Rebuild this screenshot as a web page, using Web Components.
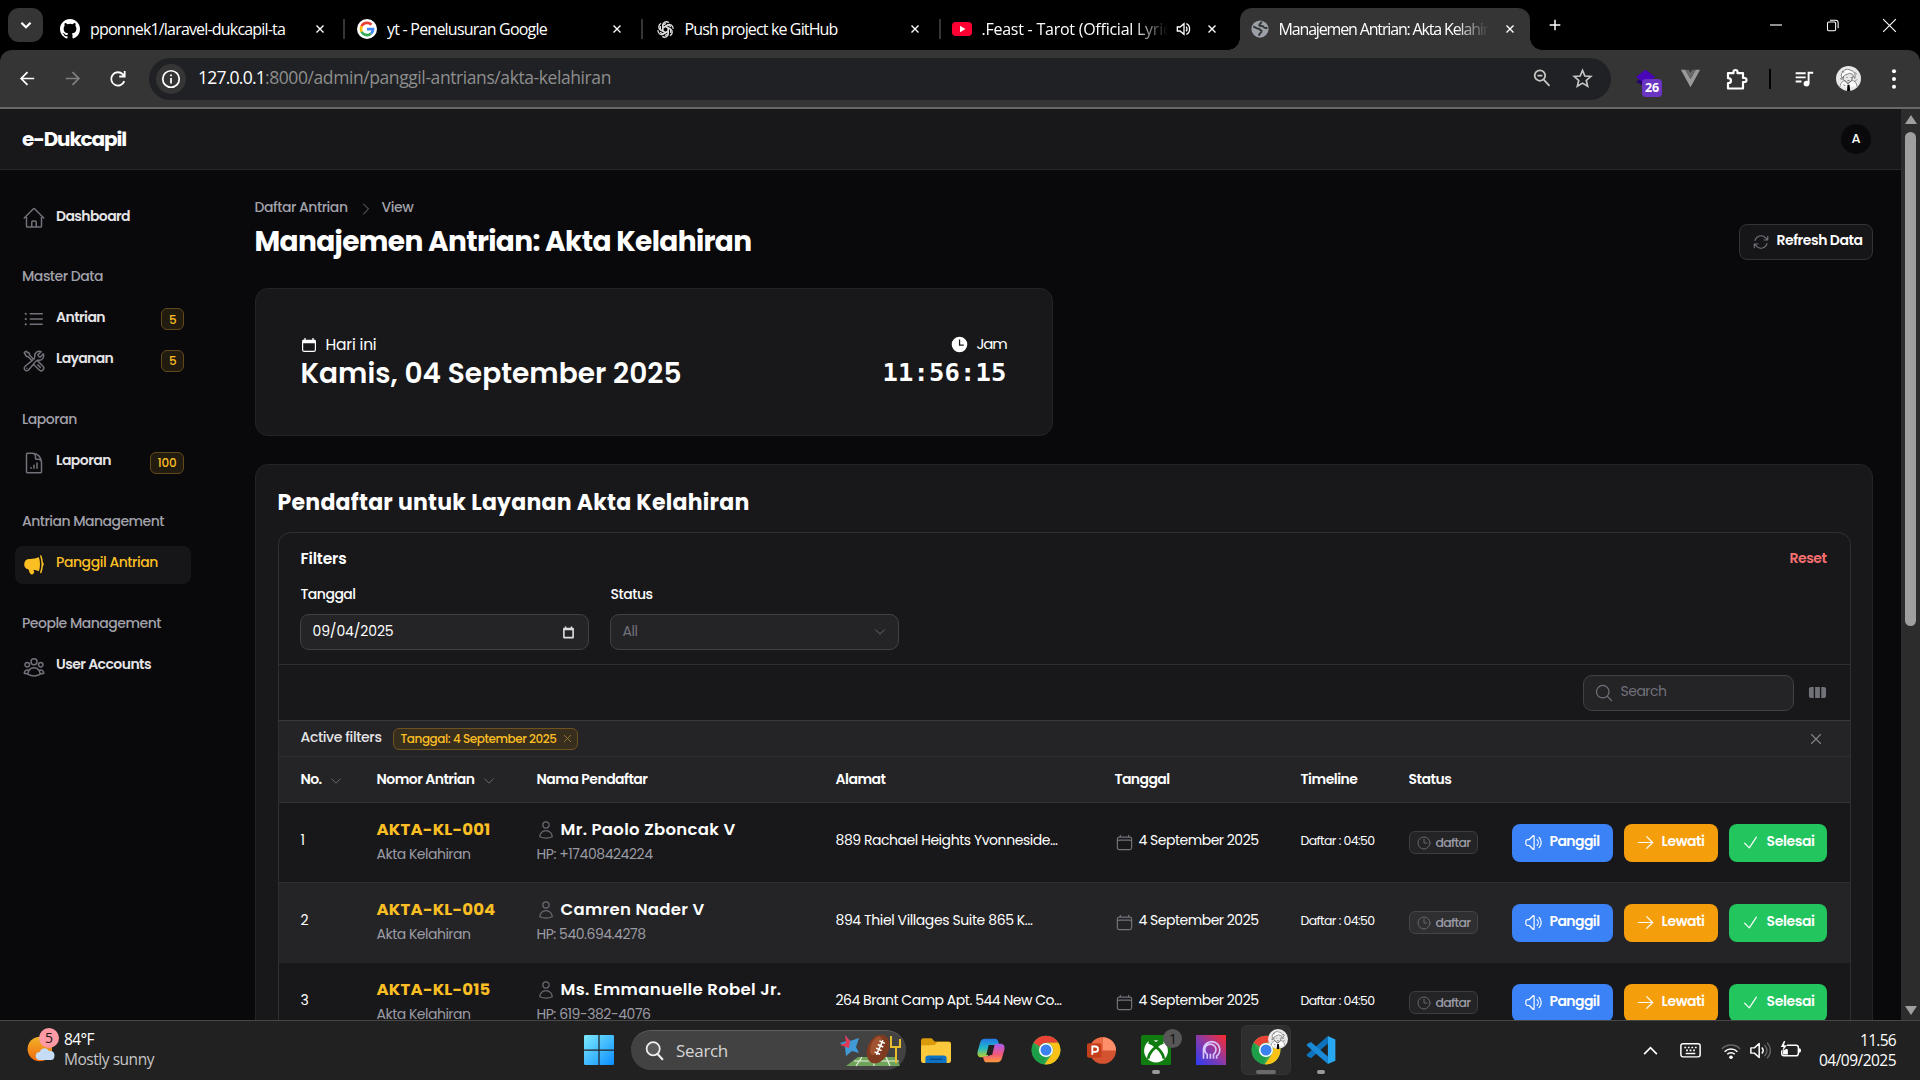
<!DOCTYPE html>
<html lang="id">
<head>
<meta charset="utf-8">
<title>Manajemen Antrian: Akta Kelahiran</title>
<style>
html,body{margin:0;height:100%;background:#000;overflow:hidden}
body{width:1920px;height:1080px;display:flex;flex-direction:column;font-family:Poppins,Inter,sans-serif;color:#fff}
</style>
</head>
<body>
<tab-strip></tab-strip>
<tool-bar></tool-bar>
<admin-page></admin-page>
<task-bar></task-bar>
<script>
const define=(name,html,setup)=>customElements.define(name,class extends HTMLElement{
  constructor(){super();this.attachShadow({mode:'open'});}
  connectedCallback(){
    if(this.ready)return;this.ready=true;
    this.shadowRoot.innerHTML='<style>*{box-sizing:border-box}</style>'+(typeof html==='function'?html(this):html);
    if(setup)setup(this);
  }
});
const A=(e,n,d='')=>e.getAttribute(n)??d;

/* ---------- icon set ---------- */
const O=d=>`<g fill="none" stroke="currentColor" stroke-width="1.5" stroke-linecap="round" stroke-linejoin="round">${d.split('|').map(p=>`<path d="${p}"/>`).join('')}</g>`;
const chrome=`<circle cx="12" cy="12" r="11.5" fill="#34a853"/><path d="M12 .5a11.5 11.5 0 0 1 9.96 5.75H12A5.75 5.75 0 0 0 7 9.1L2.04 6.25A11.5 11.5 0 0 1 12 .5z" fill="#ea4335"/><path d="M2.04 6.25 7.02 14.9A5.75 5.75 0 0 0 12 17.75L9.7 23.3A11.5 11.5 0 0 1 2.04 6.25z" fill="#1e9e48"/><path d="M21.96 6.25A11.5 11.5 0 0 1 11 23.45l5.98-8.57A5.75 5.75 0 0 0 12 6.25z" fill="#fbc116"/><circle cx="12" cy="12" r="5.6" fill="#fff"/><circle cx="12" cy="12" r="4.4" fill="#3b82f0"/>`;
const face=`<circle cx="12" cy="12" r="12" fill="#e8e8e8"/><path d="M5 9c1-5 5-7 9-5 4 1 5 5 4 8l-2-4-3-1-5 2-2 3z" fill="#fff" stroke="#777" stroke-width=".9"/><path d="M4 20c0-4 3-6 5-6l3 3 3-3c3 0 5 2 5 6" fill="#fff" stroke="#888" stroke-width=".9"/><path d="M7 10v3l4 4 4-3 1-4M10 11h1M14 11h1M11 14h2M4 12l2 1M18 6l2 2M6 5l2 1M20 13l-2 2M7 18l2 1" fill="none" stroke="#666" stroke-width=".9"/><path d="M11 18h2l.6 6h-3z" fill="#000"/>`;
const ICONS={
home:O('m2.25 12 8.954-8.955c.44-.439 1.152-.439 1.591 0L21.75 12M4.5 9.75v10.125c0 .621.504 1.125 1.125 1.125H9.75v-4.875c0-.621.504-1.125 1.125-1.125h2.25c.621 0 1.125.504 1.125 1.125V21h4.125c.621 0 1.125-.504 1.125-1.125V9.75M8.25 21h8.25'),
list:O('M8.25 6.75h12M8.25 12h12m-12 5.25h12M3.75 6.75h.007v.008H3.75V6.75Zm.375 0a.375.375 0 1 1-.75 0 .375.375 0 0 1 .75 0ZM3.75 12h.007v.008H3.75V12Zm.375 0a.375.375 0 1 1-.75 0 .375.375 0 0 1 .75 0Zm-.375 5.25h.007v.008H3.75v-.008Zm.375 0a.375.375 0 1 1-.75 0 .375.375 0 0 1 .75 0Z'),
tools:O('M11.42 15.17 17.25 21A2.652 2.652 0 0 0 21 17.25l-5.877-5.877M11.42 15.17l2.496-3.03c.317-.384.74-.626 1.208-.766M11.42 15.17l-4.655 5.653a2.548 2.548 0 1 1-3.586-3.586l6.837-5.63m5.108-.233c.55-.164 1.163-.188 1.743-.14a4.5 4.5 0 0 0 4.486-6.336l-3.276 3.277a3.004 3.004 0 0 1-2.25-2.25l3.276-3.276a4.5 4.5 0 0 0-6.336 4.486c.091 1.076-.071 2.264-.904 2.95l-.102.085m-1.745 1.437L5.909 7.5H4.5L2.25 3.75l1.5-1.5L7.5 4.5v1.409l4.26 4.26m-1.745 1.437 1.745-1.437m6.615 8.206L15.75 15.75M4.867 19.125h.008v.008h-.008v-.008Z'),
doc:O('M19.5 14.25v-2.625a3.375 3.375 0 0 0-3.375-3.375h-1.5A1.125 1.125 0 0 1 13.5 7.125v-1.5a3.375 3.375 0 0 0-3.375-3.375H8.25M9 16.5v.75m3-3v3M15 12v5.25m-4.5-15H5.625c-.621 0-1.125.504-1.125 1.125v17.25c0 .621.504 1.125 1.125 1.125h12.75c.621 0 1.125-.504 1.125-1.125V11.25a9 9 0 0 0-9-9Z'),
horn:'<path fill="currentColor" d="M16.881 4.345A23.112 23.112 0 0 1 8.25 6H7.5a5.25 5.25 0 0 0-.88 10.427 21.593 21.593 0 0 0 1.378 3.94c.464 1.004 1.674 1.32 2.582.796l.657-.379c.88-.508 1.165-1.593.772-2.468a17.116 17.116 0 0 1-.628-1.607c1.918.258 3.76.75 5.5 1.446A21.727 21.727 0 0 0 18 11.25c0-2.414-.393-4.735-1.119-6.905ZM18.26 3.74a23.22 23.22 0 0 1 1.24 7.51 23.22 23.22 0 0 1-1.41 7.992.75.75 0 1 0 1.409.516 24.555 24.555 0 0 0 1.415-6.43 2.992 2.992 0 0 0 .836-2.078c0-.807-.319-1.54-.836-2.078a24.65 24.65 0 0 0-1.415-6.43.75.75 0 1 0-1.409.516c.059.16.116.321.17.483Z"/>',
group:O('M18 18.72a9.094 9.094 0 0 0 3.741-.479 3 3 0 0 0-4.682-2.72m.94 3.198.001.031c0 .225-.012.447-.037.666A11.944 11.944 0 0 1 12 21c-2.17 0-4.207-.576-5.963-1.584A6.062 6.062 0 0 1 6 18.719m12 0a5.971 5.971 0 0 0-.941-3.197m0 0A5.995 5.995 0 0 0 12 12.75a5.995 5.995 0 0 0-5.058 2.772m0 0a3 3 0 0 0-4.681 2.72 8.986 8.986 0 0 0 3.74.477m.94-3.197a5.971 5.971 0 0 0-.94 3.197M15 6.75a3 3 0 1 1-6 0 3 3 0 0 1 6 0Zm6 3a2.25 2.25 0 1 1-4.5 0 2.25 2.25 0 0 1 4.5 0Zm-13.5 0a2.25 2.25 0 1 1-4.5 0 2.25 2.25 0 0 1 4.5 0Z'),
refresh:O('M16.023 9.348h4.992v-.001M2.985 19.644v-4.992m0 0h4.992m-4.993 0 3.181 3.183a8.25 8.25 0 0 0 13.803-3.7M4.031 9.865a8.25 8.25 0 0 1 13.803-3.7l3.181 3.182m0-4.991v4.99'),
cr:O('m8.25 4.5 7.5 7.5-7.5 7.5'),
cd:O('m19.5 8.25-7.5 7.5-7.5-7.5'),
x:O('M6 18 18 6M6 6l12 12'),
cal:O('M6.75 3v2.25M17.25 3v2.25M3 18.75V7.5a2.25 2.25 0 0 1 2.25-2.25h13.5A2.25 2.25 0 0 1 21 7.5v11.25m-18 0A2.25 2.25 0 0 0 5.25 21h13.5A2.25 2.25 0 0 0 21 18.75m-18 0v-7.5A2.25 2.25 0 0 1 5.25 9h13.5A2.25 2.25 0 0 1 21 11.25v7.5'),
calw:'<path fill="currentColor" fill-rule="evenodd" d="M5 1.5h2V4h10V1.5h2V4a3 3 0 0 1 3.5 3v12a3.500 3.500 0 0 1-3.500 3.500h-14A3.500 3.500 0 0 1 1.500 19V7A3 3 0 0 1 5 4zM3.300 9.500V19c0 1 .7 1.700 1.700 1.700h14c1 0 1.700-.7 1.700-1.700V9.500z"/>',
calin:'<path fill="#ddd" fill-rule="evenodd" d="M5 1h3v2h8V1h3v2h1a2 2 0 0 1 2 2v16a2 2 0 0 1-2 2H4a2 2 0 0 1-2-2V5a2 2 0 0 1 2-2h1zM5 8v12h14V8z"/>',
clockw:'<path fill="currentColor" fill-rule="evenodd" d="M12 1a11 11 0 1 0 0 22 11 11 0 0 0 0-22zM13 5v7h5v1.800h-6.800V5z"/>',
clock:O('M12 6v6h4.5m4.5 0a9 9 0 1 1-18 0 9 9 0 0 1 18 0Z'),
user:O('M15.75 6a3.75 3.75 0 1 1-7.5 0 3.75 3.75 0 0 1 7.5 0ZM4.501 20.118a7.5 7.5 0 0 1 14.998 0A17.933 17.933 0 0 1 12 21.75c-2.676 0-5.216-.584-7.499-1.632Z'),
spk:O('M19.114 5.636a9 9 0 0 1 0 12.728M16.463 8.288a5.25 5.25 0 0 1 0 7.424M6.75 8.25l4.72-4.72a.75.75 0 0 1 1.28.53v15.88a.75.75 0 0 1-1.28.53l-4.72-4.72H4.51c-.88 0-1.704-.507-1.938-1.354A9.009 9.009 0 0 1 2.25 12c0-.83.112-1.633.322-2.396C2.806 8.756 3.63 8.25 4.51 8.25H6.75Z'),
arrow:O('M13.5 4.5 21 12m0 0-7.5 7.5M21 12H3'),
check:O('m4.5 12.75 6 6 9-13.500'),
mag:O('m21 21-5.197-5.197m0 0A7.5 7.5 0 1 0 5.196 5.196a7.5 7.5 0 0 0 10.607 10.607Z'),
cols:'<path fill="currentColor" d="M14 17h2.750A2.250 2.250 0 0 0 19 14.750v-9.500A2.250 2.250 0 0 0 16.750 3H14zM12.500 3h-5v14h5zM3.250 3H6v14H3.250A2.250 2.250 0 0 1 1 14.750v-9.500A2.250 2.250 0 0 1 3.250 3Z" transform="translate(0 2) scale(1.2 1)"/>',
/* browser */
chev:'<path d="m7 9.500 5 5 5-5" fill="none" stroke="currentColor" stroke-width="2.400"/>',
close:'<path d="m6 6 12 12M18 6 6 18" fill="none" stroke="currentColor" stroke-width="2.400"/>',
plus:'<path d="M12 4v16M4 12h16" fill="none" stroke="currentColor" stroke-width="2.200"/>',
back:'<path d="M20.500 12H4.500M12 4l-8 8 8 8" fill="none" stroke="currentColor" stroke-width="2.200"/>',
fwd:'<path d="M3.500 12h16M12 4l8 8-8 8" fill="none" stroke="currentColor" stroke-width="2.200"/>',
reload:'<path d="M19.500 14.500A8 8 0 1 1 17.800 6.500L20 8.700M20 2.500v6.500h-6.500" fill="none" stroke="currentColor" stroke-width="2.200"/>',
info:'<circle cx="12" cy="12" r="9" fill="none" stroke="currentColor" stroke-width="1.900"/><path d="M12 11v6M12 7v2" stroke="currentColor" stroke-width="1.900"/>',
zoomout:'<circle cx="9.500" cy="9" r="6.300" fill="none" stroke="currentColor" stroke-width="2.100"/><path d="m14 14 7 7.500M6.500 9h6" stroke="currentColor" stroke-width="2.100"/>',
star:'<path d="m12 2.800 2.700 6.300 6.800.6-5.200 4.500 1.600 6.700-5.900-3.600-5.900 3.600 1.600-6.700L2.500 9.700l6.800-.6z" fill="none" stroke="currentColor" stroke-width="1.900"/>',
ext:'<path d="m1 16 11-8 11 8-10 8z" fill="#25066b"/><path d="M12 1 23 10 12 19 1 10z" fill="#4905b8"/>',
vue:'<path d="M1 2h5l6 10.500L18 2h5L12 22z" fill="#9a9a9a"/><path d="M6 2h4l2 3.500L14 2h4l-6 10.500z" fill="#686868"/>',
puzzle:'<path d="M3 6.200h5.500V5a2 2 0 0 1 4 0v1.200H18V11h1.500a2 2 0 0 1 0 4H18v6.500H3v-5.300c4 0 4-5 0-5z" fill="none" stroke="currentColor" stroke-width="2.200" stroke-linejoin="round"/>',
music:'<path d="M2 5h12M2 10h12M2 15h7" stroke="currentColor" stroke-width="2.300"/><circle cx="15" cy="17.500" r="3.500" fill="currentColor"/><path d="M17.500 17.500V4.500H23" fill="none" stroke="currentColor" stroke-width="2.300"/>',
dots:'<circle cx="12" cy="3.500" r="2.200" fill="currentColor"/><circle cx="12" cy="12" r="2.200" fill="currentColor"/><circle cx="12" cy="20.500" r="2.200" fill="currentColor"/>',
face,
github:'<path transform="scale(1.5)" fill="#fff" d="M8 0C3.58 0 0 3.58 0 8c0 3.54 2.29 6.530 5.470 7.590.4.070.550-.17.550-.38 0-.19-.010-.820-.010-1.490-2.010.370-2.530-.490-2.690-.940-.090-.230-.480-.940-.820-1.130-.280-.150-.680-.520-.010-.530.630-.010 1.080.580 1.230.820.720 1.210 1.870.870 2.330.660.070-.520.280-.870.510-1.070-1.780-.2-3.640-.890-3.640-3.950 0-.870.310-1.590.820-2.150-.080-.2-.360-1.020.080-2.120 0 0 .670-.210 2.200.820a7.640 7.640 0 0 1 4 0c1.530-1.040 2.200-.820 2.200-.820.440 1.100.160 1.920.080 2.120.510.560.820 1.270.820 2.150 0 3.070-1.870 3.750-3.650 3.950.290.250.540.730.540 1.480 0 1.070-.010 1.930-.010 2.200 0 .210.150.460.550.380A8.010 8.010 0 0 0 16 8c0-4.420-3.580-8-8-8z"/>',
google:'<circle cx="12" cy="12" r="12" fill="#fff"/><g fill="none" stroke-width="3.300"><path d="M17.300 6.900A7.300 7.300 0 0 0 5.500 8.700" stroke="#ea4335"/><path d="M5.500 8.700a7.300 7.300 0 0 0 0 6.600" stroke="#fbbc05"/><path d="M5.500 15.300a7.300 7.300 0 0 0 11.300 2.200" stroke="#34a853"/><path d="M16.800 17.500A7.300 7.300 0 0 0 19.300 12H12" stroke="#4285f4"/></g>',
gpt:'<g fill="none" stroke="#ddd" stroke-width="1.700">'+[0,60,120,180,240,300].map(a=>`<path transform="rotate(${a} 12 12)" d="M8.500 14V6.500c0-3.500 4.500-5.500 7.500-3.200M8.500 10l6.500-3.800 4 2.300"/>`).join('')+'</g>',
yt:'<rect x="0" y="3.500" width="24" height="17" rx="4.500" fill="#ff0033"/><path d="m9.600 8.200 6.500 3.800-6.500 3.800z" fill="#fff"/>',
audio:'<path d="M2 9v6h4l6 5V4L6 9z" fill="none" stroke="currentColor" stroke-width="2"/><path d="M15 8.500c2 1.500 2 5.500 0 7M15.500 4c6.500 2.500 6.500 13.500 0 16" fill="none" stroke="currentColor" stroke-width="2"/>',
globe:'<circle cx="12" cy="12" r="11.500" fill="#9aa0a6"/><path d="M3 9c3 0 4 3 7 2.500 2 0 2 2.500 4 3 0 3-3 3-3.500 6.500M14 2c0 3-3 2.500-3 5 2 2 5 0 6 2.500 1 2 3 1 5 1" fill="none" stroke="#353535" stroke-width="2.600"/>',
min:'<path d="M3 12h18" stroke="currentColor" stroke-width="1.700"/>',
rest:'<rect x="4" y="6.500" width="13" height="14" rx="2" fill="none" stroke="currentColor" stroke-width="1.700"/><path d="M8 3.500h9a4 4 0 0 1 4 4v9" fill="none" stroke="currentColor" stroke-width="1.700"/>',
wclose:'<path d="m3 3 18 18M21 3 3 21" fill="none" stroke="currentColor" stroke-width="1.600"/>',
/* taskbar */
sun:'<defs><linearGradient id="s" x1="0" y1="0" x2="0" y2="1"><stop stop-color="#f0b429"/><stop offset="1" stop-color="#f0690f"/></linearGradient></defs><circle cx="11" cy="12" r="10.500" fill="url(#s)"/><path d="M11 21.500a3.500 3.500 0 0 1 0-7c1-4 6.500-4 7.500-1 4-.5 5.500 2.500 5 4.500 0 2-1 3.500-3 3.500z" fill="#c5dcf7"/>',
win:'<defs><linearGradient id="w" x1="0" y1="0" x2="1" y2="1"><stop stop-color="#7deaff"/><stop offset="1" stop-color="#0a8eff"/></linearGradient></defs><path d="M1 0h10.500v11.500H0V1a1 1 0 0 1 1-1zM12.500 0H23a1 1 0 0 1 1 1v10.500H12.500zM0 12.500h11.500V24H1a1 1 0 0 1-1-1zM12.500 12.500H24V23a1 1 0 0 1-1 1H12.500z" fill="url(#w)"/>',
smag:'<circle cx="10.500" cy="10" r="7.500" fill="#5a5a5a" stroke="#eee" stroke-width="2"/><path d="m15.500 16 5.500 6" stroke="#eee" stroke-width="2.400" stroke-linecap="round"/>',
folder:'<path d="M0 3a2 2 0 0 1 2-2h6.500l2.500 3H22a2 2 0 0 1 2 2v5H0z" fill="#d99a0b"/><path d="M0 7.500 11 7l2-2.500h9a2 2 0 0 1 2 2V21a2 2 0 0 1-2 2H2a2 2 0 0 1-2-2z" fill="#fdc93c"/><path d="M3.500 23v-4a2.500 2.500 0 0 1 2.500-2.500h12a2.500 2.500 0 0 1 2.500 2.500v4z" fill="#0d72c4"/><path d="M7 19.800h10" stroke="#0a4c8a" stroke-width="1.300"/>',
copilot:'<defs><linearGradient id="a" x1="0" y1="0" x2="0" y2="1"><stop stop-color="#2377e8"/><stop offset=".5" stop-color="#21b7c7"/><stop offset="1" stop-color="#b9d12c"/></linearGradient><linearGradient id="b" x1="0" y1="0" x2="0" y2="1"><stop stop-color="#a85df0"/><stop offset=".55" stop-color="#f0567e"/><stop offset="1" stop-color="#fb9b3a"/></linearGradient></defs><path d="M6.500 1.500h9c2 0 2.500 1.500 3 3.500l.5 2h-4c-2 0-3 1-3.500 3l-1.500 5.500c-.5 1.500-1.500 2.500-3 2.500H4c-3 0-4-2-3.500-5l2-7.500c.6-2.500 2-4 4-4z" fill="url(#a)"/><path d="M17.500 22.500h-9c-2 0-2.500-1.500-3-3.500L5 17h4c2 0 3-1 3.500-3L14 8.500C14.500 7 15.500 6 17 6h3c3 0 4 2 3.500 5l-2 7.500c-.6 2.500-2 4-4 4z" fill="url(#b)"/><path d="M10 7h5l-2 9H8z" fill="#202020"/>',
chrome,
ppt:'<circle cx="13" cy="12" r="11" fill="#d35230"/><path d="M13 1a11 11 0 0 1 11 11H13z" fill="#ff8f6b"/><path d="M13 1v11H2A11 11 0 0 1 13 1z" fill="#ed6c47"/><rect x="0" y="6" width="12" height="12" rx="1.500" fill="#c43e1c"/><path d="M4.400 15.500V8.700h2.500a2.200 2.200 0 0 1 0 4.400H4.400" fill="none" stroke="#fff" stroke-width="1.500"/>',
xbox:'<rect width="24" height="24" rx="1.500" fill="#107c10"/><circle cx="12" cy="12.500" r="9.500" fill="#fff"/><path d="M6.500 4.700C9 4.500 11 6 12 6.800c1-.8 3-2.300 5.500-2.100C15.500 3.500 14 3 12 3s-3.500.5-5.500 1.700zM12 9.500c-4 3-6.500 7.500-6 9.500M12 9.500c4 3 6.500 7.500 6 9.500M12 9.500C10.500 8 8 6.300 6 6M12 9.500C13.500 8 16 6.300 18 6" fill="none" stroke="#107c10" stroke-width="2.200"/>',
gem:'<defs><linearGradient id="g" x1="0" y1="1" x2="1" y2="0"><stop stop-color="#2b3cf5"/><stop offset=".5" stop-color="#8b3aa8"/><stop offset="1" stop-color="#ff2a2a"/></linearGradient></defs><rect width="24" height="24" fill="url(#g)"/><path d="M6 19V12a6.500 6.500 0 1 1 10.500 5v2M9 19v-3.500a4.500 4.500 0 1 1 5 0V19M11.500 19v-4" fill="none" stroke="#d9c8ff" stroke-width="1.300"/>',
vscode:'<path d="M17.500.8 23.500 3.500v17l-6 2.700z" fill="#29a8f2"/><path d="M17.500.8v6L4 18.500l-3-1.600c-.6-.5-.6-1.200 0-1.700z" fill="#0d73bd"/><path d="M17.500 23.200v-6L4 5.500 1 7.100c-.6.5-.6 1.200 0 1.700z" fill="#1a8ad6"/>',
kbd:'<rect x="1" y="3.500" width="22" height="16.500" rx="2.500" fill="none" stroke="#fff" stroke-width="1.700"/><path d="M5 8.200h14M7 11.800h12" stroke="#fff" stroke-width="2" stroke-dasharray="2 2"/><path d="M6.500 15.800h11" stroke="#fff" stroke-width="1.800"/>',
wifi:'<path d="M1 9.500a15.500 15.500 0 0 1 22 0" fill="none" stroke="#666" stroke-width="1.800"/><path d="M4.300 12.800a11 11 0 0 1 15.400 0M7.500 16a6.300 6.300 0 0 1 9 0" fill="none" stroke="#fff" stroke-width="1.800"/><circle cx="12" cy="19.500" r="2.200" fill="#fff"/>',
vol:'<path d="M1 9v6h4l5.500 5V4L5 9z" fill="none" stroke="#fff" stroke-width="1.700" stroke-linejoin="round"/><path d="M13.500 8.500c1.800 2 1.800 5 0 7" fill="none" stroke="#fff" stroke-width="1.700"/><path d="M16.500 5.500c3.500 4 3.500 9 0 13M19.500 3c5 5.500 5 12.500 0 18" fill="none" stroke="#666" stroke-width="1.500"/>',
batt:'<path d="M8 6h10.500A2.500 2.500 0 0 1 21 8.500v7a2.500 2.500 0 0 1-2.500 2.500H4.500A2.500 2.500 0 0 1 2 15.500V12" fill="none" stroke="#fff" stroke-width="1.700"/><path d="M21.500 9.500c2 0 2.500 1 2.500 2.500s-.5 2.500-2.500 2.500zM3.500 16.500V12l4-2 1.500 1v5.500zM4.500 1 1 8h3l-1.500 5L8 6H4.500L6 1z" fill="#fff"/>',
up:'<path d="m3 17 9-9 9 9" fill="none" stroke="#fff" stroke-width="2.400"/>'
};
define('ui-icon',e=>{const s=A(e,'s','24');return `<style>:host{display:inline-flex;flex:none}svg{display:block}</style><svg width="${s}" height="${A(e,'h',s)}" viewBox="0 0 24 24" preserveAspectRatio="none">${ICONS[A(e,'n')]}</svg>`});

/* ---------- browser ---------- */
define('browser-tab',e=>`<style>
:host{display:flex;width:${A(e,'w')}px;height:42px;flex:none;align-items:center;padding-left:${A(e,'pl','12')}px;position:relative;color:#fff;box-sizing:border-box}
:host([active]){background:#353535;border-radius:12px 12px 0 0}
:host([active])::before,:host([active])::after{content:"";position:absolute;bottom:0;width:12px;height:12px}
:host([active])::before{left:-12px;background:radial-gradient(circle at 0 0,transparent 11.500px,#353535 12px)}
:host([active])::after{right:-12px;background:radial-gradient(circle at 100% 0,transparent 11.500px,#353535 12px)}
.t{width:${A(e,'tw')}px;margin-left:10px;overflow:hidden;white-space:nowrap}
.fade{-webkit-mask-image:linear-gradient(90deg,#000 calc(100% - 34px),transparent)}
.c{margin-left:auto;display:flex;align-items:center;gap:13px;margin-right:${A(e,'cr','17')}px}
i{width:2px;height:20px;background:#353535}
</style><ui-icon n="${A(e,'icon')}" s="${A(e,'is','20')}"></ui-icon><div class="t ${e.hasAttribute('fade')?'fade':''}"><slot></slot></div><div class="c">${e.hasAttribute('audio')?'<ui-icon n="audio" s="16"></ui-icon>':''}<ui-icon n="close" s="14"></ui-icon></div>${e.hasAttribute('div')?'<i></i>':''}`);
define('tab-strip',`<style>:host{display:flex;height:50px;background:#000;padding-top:8px;box-sizing:border-box;flex:none}
.s{width:35px;height:34px;border-radius:11px;background:#353535;display:flex;align-items:center;justify-content:center;margin:0 5px 0 8px}
.p{width:50px;display:flex;justify-content:center;align-items:center;height:34px}.w{margin-left:auto;display:flex;height:34px;align-items:center;padding-right:22px;gap:41px}</style>
<div class="s"><ui-icon n="chev" s="22"></ui-icon></div>
<browser-tab w="297" icon="github" tw="220" cr="16" div><ui-text f="s" s="16" w="195">pponnek1/laravel-dukcapil-ta</ui-text></browser-tab>
<browser-tab w="297.500" icon="google" tw="220" div><ui-text f="s" s="16" w="160">yt - Penelusuran Google</ui-text></browser-tab>
<browser-tab w="298" icon="gpt" is="19" pl="13" tw="220" div><ui-text f="s" s="16" w="153">Push project ke GitHub</ui-text></browser-tab>
<browser-tab w="299" icon="yt" tw="186" audio fade pl="11" cr="21"><ui-text f="s" s="16" w="238">.Feast - Tarot (Official Lyric Video)</ui-text></browser-tab>
<browser-tab w="290" icon="globe" is="18" pl="11" tw="210" active fade cr="13"><ui-text f="s" s="16" w="226">Manajemen Antrian: Akta Kelahiran</ui-text></browser-tab>
<div class="p"><ui-icon n="plus" s="16"></ui-icon></div>
<div class="w"><ui-icon n="min" s="16"></ui-icon><ui-icon n="rest" s="15"></ui-icon><ui-icon n="wclose" s="17"></ui-icon></div>`);
define('tool-bar',`<style>:host{display:flex;height:59px;flex:none;background:#353535;border-bottom:2px solid #686868;box-sizing:border-box;align-items:center;border-radius:12px 12px 0 0;padding-left:5px}
.c{width:45px;display:flex;justify-content:center;flex:none}
.o{width:1462px;height:42px;border-radius:21px;background:#202124;margin-left:9px;display:flex;align-items:center;padding-left:7px;flex:none;color:#c7c7c7}
.n{width:30px;height:30px;border-radius:50%;background:#353535;color:#fff;display:flex;align-items:center;justify-content:center;margin-right:12px}
.u{flex:1;color:#8e8e8e}.u ui-text:first-child{color:#fff}.z{display:flex;gap:20px;padding-right:18px}
.e{position:relative;margin-left:24px;width:24px;height:42px;flex:none}.e ui-icon{margin-top:11px}
.b{position:absolute;left:7px;top:21px;width:20px;height:18px;border-radius:4px;background:#6b35c4;display:flex;align-items:center;justify-content:center}
.r{display:flex;align-items:center;flex:1}.v{width:2px;height:20px;background:#000}</style>
<div class="c"><ui-icon n="back" s="19"></ui-icon></div><div class="c" style="color:#808080"><ui-icon n="fwd" s="19"></ui-icon></div><div class="c"><ui-icon n="reload" s="20"></ui-icon></div>
<div class="o"><div class="n"><ui-icon n="info" s="22"></ui-icon></div><div class="u"><ui-text f="s" s="17.500" w="67">127.0.0.1</ui-text><ui-text f="s" s="17.500" w="346">:8000/admin/panggil-antrians/akta-kelahiran</ui-text></div><div class="z"><ui-icon n="zoomout" s="20"></ui-icon><ui-icon n="star" s="21"></ui-icon></div></div>
<div class="e"><ui-icon n="ext" s="21" h="19"></ui-icon><div class="b"><ui-text f="s" s="12.500" b="700" w="14">26</ui-text></div></div>
<div class="r"><ui-icon n="vue" s="21" style="margin-left:21px"></ui-icon><ui-icon n="puzzle" s="24" style="margin-left:24px"></ui-icon><div class="v" style="margin-left:20px"></div><ui-icon n="music" s="20" style="margin-left:23px"></ui-icon><ui-icon n="face" s="25" style="margin-left:22px"></ui-icon><ui-icon n="dots" s="22" style="margin-left:22px"></ui-icon></div>`);

/* ---------- admin page ---------- */
define('nav-item',e=>`<style>:host{display:flex;height:38px;align-items:center;padding:0 7px;border-radius:8px;color:#e4e4e7;box-sizing:border-box;margin-bottom:3.500px}
:host([active]){background:#161618;color:#fbbf24}ui-icon{color:#71717a;margin-right:10px}:host([active]) ui-icon{color:#fbbf24}ui-text{padding-bottom:3px}
.b{margin-left:auto;height:22px;width:${A(e,'bw')}px;border:1px solid #63491a;background:#221b10;border-radius:6px;color:#fbbf24;display:flex;align-items:center;justify-content:center}.b ui-text{padding:0}</style>
<ui-icon n="${A(e,'icon')}" s="24"></ui-icon><ui-text s="14" b="${e.hasAttribute('active')?500:600}" w="${A(e,'w')}">${A(e,'label')}</ui-text>${e.hasAttribute('badge')?`<div class="b"><ui-text s="12" b="500" w="${A(e,'n')}">${A(e,'badge')}</ui-text></div>`:''}`);
define('nav-group',e=>`<style>:host{display:block;margin-top:${A(e,'mt','28.500')}px}.l{height:24px;padding-left:7px;display:flex;align-items:center;color:#a1a1aa;margin-bottom:11.500px}</style>${e.hasAttribute('label')?`<div class="l"><ui-text s="14" b="500" w="${A(e,'w')}">${A(e,'label')}</ui-text></div>`:''}<slot></slot>`);
define('side-nav',`<style>:host{display:block;width:191px;padding:29px 0 0 15px;box-sizing:border-box;flex:none}</style>
<nav-group mt="0"><nav-item icon="home" label="Dashboard" w="74"></nav-item></nav-group>
<nav-group label="Master Data" w="81" mt="27.500"><nav-item icon="list" label="Antrian" w="49" badge="5" bw="23" n="7"></nav-item><nav-item icon="tools" label="Layanan" w="57" badge="5" bw="23" n="7"></nav-item></nav-group>
<nav-group label="Laporan" w="55"><nav-item icon="doc" label="Laporan" w="55" badge="100" bw="34" n="19"></nav-item></nav-group>
<nav-group label="Antrian Management" w="142"><nav-item icon="horn" label="Panggil Antrian" w="102" active></nav-item></nav-group>
<nav-group label="People Management" w="139"><nav-item icon="group" label="User Accounts" w="95"></nav-item></nav-group>`);
define('page-head',`<style>:host{display:flex;justify-content:space-between;align-items:flex-end;height:62px}
.b{height:20px;display:flex;align-items:center;color:#a1a1aa}.b ui-icon{margin:1px 8px 0 10px;color:#71717a}.h{height:36px;display:flex;align-items:center;margin:5px 0 1px}
button{all:unset;box-sizing:border-box;width:134px;height:36px;border:1px solid #333336;background:#161618;border-radius:8px;display:flex;align-items:center;padding-left:12px;gap:7px}button ui-icon{color:#71717a}button ui-text{padding-bottom:2px}</style>
<div><div class="b"><ui-text s="14" b="500" w="93">Daftar Antrian</ui-text><ui-icon n="cr" s="16"></ui-icon><ui-text s="14" b="500" w="32">View</ui-text></div><div class="h"><ui-text s="28" b="700" w="497">Manajemen Antrian: Akta Kelahiran</ui-text></div></div>
<button><ui-icon n="refresh" s="18"></ui-icon><ui-text s="14" b="600" w="86">Refresh Data</ui-text></button>`);
define('clock-card',`<style>:host{display:flex;justify-content:space-between;width:798px;height:148px;margin-top:28px;box-sizing:border-box;background:#18181b;border:1px solid #242427;border-radius:13px;padding:44px 45px 0 45px}
.a{height:23px;display:flex;align-items:center}.a ui-icon{margin-right:9px}.k{height:34px;display:flex;align-items:center}.r{display:flex;flex-direction:column;align-items:flex-end}</style>
<div><div class="a"><ui-icon n="calw" s="16"></ui-icon><ui-text s="15.500" b="400" w="51">Hari ini</ui-text></div><div class="k"><ui-text s="28" b="600" w="381">Kamis, 04 September 2025</ui-text></div></div>
<div class="r"><div class="a"><ui-icon n="clockw" s="17"></ui-icon><ui-text s="15" b="400" w="30">Jam</ui-text></div><div class="k"><ui-text f="m" s="25.500" b="700" w="124">11:56:15</ui-text></div></div>`);
define('form-field',e=>`<style>:host{display:block;width:289px}.l{height:25px;display:flex;align-items:center;padding-left:1px;margin-bottom:6px}
.i{height:36px;box-sizing:border-box;border:1px solid #414144;border-radius:9px;background:#242427;display:flex;align-items:center;justify-content:space-between;padding:0 ${A(e,'pr')}px 0 12px;color:${A(e,'c')}}ui-text{padding-bottom:1px}</style>
<div class="l"><ui-text s="14" b="500" w="${A(e,'lw')}">${A(e,'label')}</ui-text></div><div class="i"><ui-text s="14" b="400" w="${A(e,'vw')}">${A(e,'value')}</ui-text><ui-icon n="${A(e,'icon')}" s="${A(e,'is')}"></ui-icon></div>`);
const COLS='grid-template-columns:76px 160px 299px 279px 186px 108px 103px 315px';
define('action-button',e=>`<style>:host{display:flex;width:${A(e,'bw')}px;height:38px;border-radius:8px;background:${A(e,'bg')};align-items:center;padding-left:12px;gap:${A(e,'g','7')}px;box-sizing:border-box;color:#fff}ui-text{padding-bottom:2px}</style><ui-icon n="${A(e,'icon')}" s="19"></ui-icon><ui-text s="14" b="600" w="${A(e,'w')}">${A(e,'label')}</ui-text>`);
define('queue-row',e=>`<style>:host{display:grid;${COLS};height:80px;box-sizing:border-box;padding-left:22px;border-bottom:1px solid #2f2f32;align-items:center;color:#fff}
:host([odd]){background:#242427;border-bottom-color:#242427}
.two{display:flex;flex-direction:column}.two div{height:25px;display:flex;align-items:center}.g{color:#9b9ba3}.am{color:#fbbf24}
.u ui-icon{color:#6a6a72;margin:0 5px 0 -1px}.c{padding-bottom:3px;display:flex;align-items:center}.d ui-icon{color:#71717a;margin:3px 5px 0 0}
.s{width:69px;height:23px;border:1px solid #3d3d41;background:#242427;border-radius:6px;display:flex;align-items:center;padding-left:6px;gap:4px;color:#9b9ba3}:host([odd]) .s{background:#2f2f32;border-color:#454549}.s ui-icon{color:#65656c}
.b{display:flex;gap:11px}</style>
<div class="c"><ui-text s="14" b="400" w="${A(e,'nw')}">${A(e,'no')}</ui-text></div>
<div class="two"><div class="am"><ui-text s="16.500" b="700" w="${A(e,'cw')}">${A(e,'code')}</ui-text></div><div class="g"><ui-text s="14" b="400" w="94">Akta Kelahiran</ui-text></div></div>
<div class="two"><div class="u"><ui-icon n="user" s="20"></ui-icon><ui-text s="16.500" b="600" w="${A(e,'mw')}">${A(e,'name')}</ui-text></div><div class="g"><ui-text s="14" b="400" w="${A(e,'hw')}">HP: ${A(e,'hp')}</ui-text></div></div>
<div class="c"><ui-text s="14" b="400" w="${A(e,'aw')}">${A(e,'addr')}</ui-text></div>
<div class="c d"><ui-icon n="cal" s="19"></ui-icon><ui-text s="14" b="400" w="120">4 September 2025</ui-text></div>
<div class="c"><ui-text s="12.500" b="400" w="74">Daftar : 04:50</ui-text></div>
<div class="s"><ui-icon n="clock" s="16"></ui-icon><ui-text s="12.500" b="500" w="35">daftar</ui-text></div>
<div class="b"><action-button bw="101" bg="#3b82f6" icon="spk" label="Panggil" w="50"></action-button><action-button bw="94" bg="#f59e0b" icon="arrow" label="Lewati" w="43"></action-button><action-button bw="98" bg="#22c55e" icon="check" label="Selesai" w="48"></action-button></div>`);
define('queue-table',`<style>:host{display:block;border:1px solid #2f2f32;border-bottom:0;border-radius:13px 13px 0 0;height:520px}
.f{height:132px;border-bottom:1px solid #2f2f32;padding:13px 23px 0 21px;box-sizing:border-box}.t{display:flex;justify-content:space-between;align-items:center;height:25px;margin:0 0 12px 1px}.ff{display:flex;gap:21px}
.s{height:56px;border-bottom:1px solid #3a3a3d;display:flex;align-items:center;justify-content:flex-end;padding-right:23px;gap:14px;color:#71717a}
.q{width:211px;height:36px;border:1px solid #414144;border-radius:9px;background:#242427;display:flex;align-items:center;padding-left:10px;gap:7px}.q ui-text{padding-bottom:1px}
.a{height:36px;background:#242427;border-bottom:1px solid #2f2f32;display:flex;align-items:center;padding:0 25px 0 22px;color:#e4e4e7}
.a>ui-text{padding-bottom:2px}
.c{width:185px;height:22px;margin-left:11px;border:1px solid #6e5220;background:#382e1e;border-radius:6px;color:#fbbf24;display:flex;align-items:center;padding-left:7px;gap:4px}.c ui-icon{color:#a88432}.x{margin-left:auto;color:#85858c}
.h{display:grid;${COLS};height:46px;background:#242427;border-bottom:1px solid #323235;padding-left:22px;align-items:center}.h ui-icon{color:#71717a;margin:0 0 -3px 7px;vertical-align:middle}.h>div{display:flex;align-items:center}</style>
<div class="f"><div class="t"><ui-text s="15.500" b="600" w="46">Filters</ui-text><ui-text s="14" b="600" w="37" style="color:#f87171">Reset</ui-text></div>
<div class="ff"><form-field label="Tanggal" lw="55" value="09/04/2025" vw="81" icon="calin" is="13" pr="13" c="#fff"></form-field><form-field label="Status" lw="42" value="All" vw="15" icon="cd" is="14" pr="11" c="#71717a"></form-field></div></div>
<div class="s"><div class="q"><ui-icon n="mag" s="20"></ui-icon><ui-text s="14" b="400" w="46">Search</ui-text></div><ui-icon n="cols" s="19"></ui-icon></div>
<div class="a"><ui-text s="14" b="500" w="81">Active filters</ui-text><div class="c"><ui-text s="12" b="500" w="156">Tanggal: 4 September 2025</ui-text><ui-icon n="x" s="13"></ui-icon></div><ui-icon class="x" n="x" s="18"></ui-icon></div>
<div class="h"><div><ui-text s="14" b="600" w="21">No.</ui-text><ui-icon n="cd" s="14"></ui-icon></div><div><ui-text s="14" b="600" w="98">Nomor Antrian</ui-text><ui-icon n="cd" s="14"></ui-icon></div><div><ui-text s="14" b="600" w="111">Nama Pendaftar</ui-text></div><div><ui-text s="14" b="600" w="50">Alamat</ui-text></div><div><ui-text s="14" b="600" w="55">Tanggal</ui-text></div><div><ui-text s="14" b="600" w="57">Timeline</ui-text></div><div><ui-text s="14" b="600" w="43">Status</ui-text></div><div></div></div>
<queue-row no="1" nw="5" code="AKTA-KL-001" cw="114" name="Mr. Paolo Zboncak V" mw="175" hp="+17408424224" hw="116" addr="889 Rachael Heights Yvonneside..." aw="222"></queue-row>
<queue-row odd no="2" nw="8" code="AKTA-KL-004" cw="119" name="Camren Nader V" mw="144" hp="540.694.4278" hw="109" addr="894 Thiel Villages Suite 865 K..." aw="197"></queue-row>
<queue-row no="3" nw="8" code="AKTA-KL-015" cw="114" name="Ms. Emmanuelle Robel Jr." mw="221" hp="619-382-4076" hw="114" addr="264 Brant Camp Apt. 544 New Co..." aw="226"></queue-row>`);
define('admin-page',`<style>:host{display:flex;height:911px;overflow:hidden;background:#09090b;flex:none}
.p{flex:1;min-width:0}.top{height:61px;background:#18181b;border-bottom:1px solid #27272a;display:flex;align-items:center;justify-content:space-between;padding:0 30px 0 22px}
.av{width:30px;height:30px;border-radius:50%;background:#09090b;display:flex;align-items:center;justify-content:center}
.m{display:flex}.c{width:1618px;margin-left:63.500px;padding-top:28px;flex:none}
.card{margin-top:28px;height:600px;background:#18181b;border:1px solid #242427;border-radius:13px;padding:23px 21px 0 22px}.h{height:30px;display:flex;align-items:center;margin-bottom:14px}
.sb{width:19px;background:#2c2c2c;display:flex;flex-direction:column;align-items:center;padding-top:6px}
.u,.d{border:6px solid transparent;width:0;height:0}.u{border-bottom:9px solid #9f9f9f;border-top:0;margin-bottom:8px}.d{border-top:9px solid #9f9f9f;border-bottom:0;margin-top:auto;margin-bottom:5px}.th{width:11px;height:494px;border-radius:6px;background:#9f9f9f}</style>
<div class="p"><div class="top"><ui-text s="20" b="700" w="104">e-Dukcapil</ui-text><div class="av"><ui-text s="13" b="500" w="9">A</ui-text></div></div>
<div class="m"><side-nav></side-nav><div class="c"><page-head></page-head><clock-card></clock-card><div class="card"><div class="h"><ui-text s="22" b="700" w="472">Pendaftar untuk Layanan Akta Kelahiran</ui-text></div><queue-table></queue-table></div></div></div></div>
<div class="sb"><div class="u"></div><div class="th"></div><div class="d"></div></div>`);

/* ---------- taskbar ---------- */
define('task-app',e=>`<style>:host{display:flex;width:50px;height:50px;margin-right:${A(e,'mr','5')}px;align-items:center;justify-content:center;position:relative;border-radius:6px;box-sizing:border-box;flex:none}
:host([on]){background:#2e2e2e;border:1px solid #353535}.d{position:absolute;bottom:1px;left:21px;width:8px;height:4px;border-radius:2px;background:#9a9a9a}:host([on]) .d{left:14px;width:20px;bottom:0;background:#6a6a6a}
.b{position:absolute;right:-1px;top:4px;width:19px;height:19px;border-radius:50%;background:#575757;color:#111;display:flex;align-items:center;justify-content:center}.f{position:absolute;right:2px;top:3px}</style>
<ui-icon n="${A(e,'n')}" s="${A(e,'s','30')}" h="${A(e,'h',A(e,'s','30'))}"></ui-icon>${e.hasAttribute('dot')?'<div class="d"></div>':''}${e.hasAttribute('badge')?`<div class="b"><ui-text f="s" s="14" w="7">1</ui-text></div>`:''}${e.hasAttribute('on')?'<ui-icon class="f" n="face" s="20"></ui-icon>':''}`);
define('search-art',`<style>:host{display:block}svg{display:block}</style><svg width="62" height="32" viewBox="0 0 62 32"><path d="M18 22h38l4 9H6z" fill="#6fa35c"/><path d="m22 22-6 9M34 22v9M46 22l4 9M14 26h45" stroke="#e8f2dc" stroke-width="1.200"/><path d="m5 0 5 6 9-3-3 9 3 6-7-2-6 5-1-9-5-4 7-2z" fill="#3f9ad6"/><path d="m5 0 5 6-1 7-9-3 6-2z" fill="#e23a54"/><g transform="rotate(24 38 14)"><ellipse cx="38" cy="14" rx="10.500" ry="15" fill="#7f3b1f"/><ellipse cx="35" cy="12" rx="5" ry="10" fill="#a05430"/><path d="M39 4v16M36 6h6M36 10h6M36 14h6M36 18h6" stroke="#fff" stroke-width="1.500"/></g><path d="M51 1v11h9V4M56 12v16" fill="none" stroke="#e6bd2c" stroke-width="2"/></svg>`);
define('task-bar',`<style>:host{display:flex;height:60px;background:#212121;border-top:1px solid #484848;box-sizing:border-box;flex:none}
.w{width:574px;padding:9px 0 0 27px;display:flex}.i{position:relative;width:37px;padding-top:5px}.n{position:absolute;left:12px;top:-2px;width:20px;height:20px;border-radius:50%;background:#ff99a4;color:#1a1a1a;display:flex;align-items:center;justify-content:center}
.x{display:flex;flex-direction:column}.x div{height:20px;display:flex;align-items:center}
.m{display:flex;align-items:center;padding-bottom:1px}.s{width:275px;height:40px;border-radius:20px;background:#424242;border-top:1px solid #5e5e5e;display:flex;align-items:center;padding:0 4px 0 13px;margin:0 5px 0 7px;color:#d6d6d6;justify-content:space-between}
.t{margin-left:auto;display:flex;align-items:center;padding-right:24px}.t .x{align-items:flex-end;margin-left:18px}</style>
<div class="w"><div class="i"><ui-icon n="sun" s="28"></ui-icon><div class="n"><ui-text f="s" s="14" w="8">5</ui-text></div></div><div class="x"><div><ui-text f="s" s="15.500" w="30">84°F</ui-text></div><div style="color:#c6c6c6"><ui-text f="s" s="15.500" w="90">Mostly sunny</ui-text></div></div></div>
<div class="m"><task-app n="win" mr="0"></task-app><div class="s"><ui-icon n="smag" s="21"></ui-icon><ui-text f="s" s="17" w="52" style="margin:0 auto 0 11px"> Search</ui-text><search-art></search-art></div>
<task-app n="folder" h="27"></task-app><task-app n="copilot" s="28" h="27"></task-app><task-app n="chrome" s="30"></task-app><task-app n="ppt" s="29"></task-app><task-app n="xbox" badge dot></task-app><task-app n="gem"></task-app><task-app n="chrome" s="30" on dot></task-app><task-app n="vscode" dot></task-app></div>
<div class="t"><ui-icon n="up" s="17"></ui-icon><ui-icon n="kbd" s="21" h="19" style="margin-left:21px"></ui-icon><ui-icon n="wifi" s="20" style="margin-left:20px"></ui-icon><ui-icon n="vol" s="21" style="margin-left:9px"></ui-icon><ui-icon n="batt" s="21" style="margin-left:9px"></ui-icon><div class="x"><div><ui-text f="s" s="15.500" w="36">11.56</ui-text></div><div><ui-text f="s" s="15.500" w="77">04/09/2025</ui-text></div></div></div>`);

/* Text run: tracks its letters so that the run fills the width w. */
const FAM={s:'"Open Sans","Noto Sans",sans-serif',m:'"DejaVu Sans Mono",monospace',p:'Poppins,Inter,sans-serif'};
define('ui-text',e=>`<style>:host{display:inline-block;white-space:nowrap;flex:none;width:${A(e,'w')}px;font:${A(e,'b','400')} ${A(e,'s','14')}px/1.25 ${FAM[A(e,'f','p')]}}</style><span><slot></slot></span>`,e=>{
  const s=e.shadowRoot.querySelector('span'),n=[...e.textContent.trim()].length,w=+A(e,'w');
  const d=w-s.getBoundingClientRect().width;
  if(n>1)s.style.letterSpacing=(d/n).toFixed(3)+'px';
});
</script>
</body>
</html>
